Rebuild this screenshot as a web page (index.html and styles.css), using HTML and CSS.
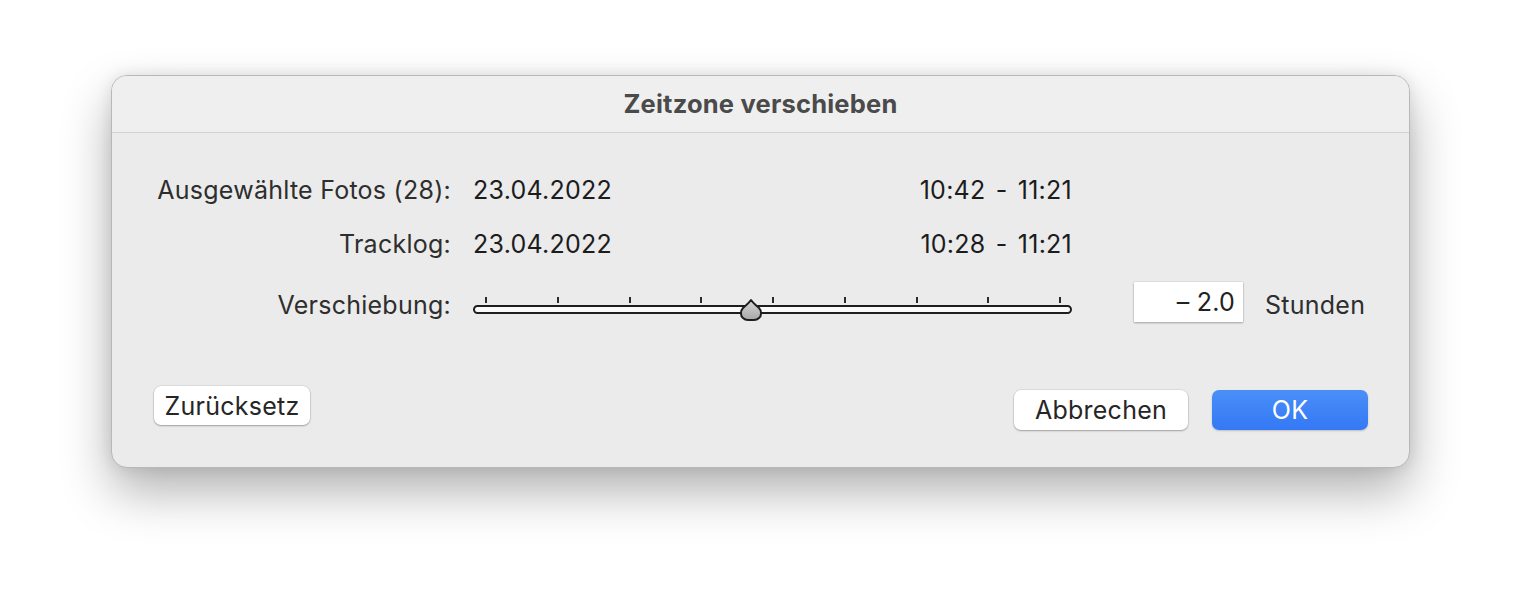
FILE: index.html
```html
<!DOCTYPE html>
<html lang="de">
<head>
<meta charset="utf-8">
<title>Zeitzone verschieben</title>
<link rel="stylesheet" href="styles.css">
</head>
<body>
<div class="window">
  <div class="titlebar">Zeitzone verschieben</div>
  <div class="content">
    <div class="grid">
      <div class="label">Ausgewählte Fotos (28):</div>
      <div class="value-row"><span>23.04.2022</span><span class="time">10:42 - 11:21</span></div>
      <div></div><div></div>

      <div class="label">Tracklog:</div>
      <div class="value-row"><span>23.04.2022</span><span class="time">10:28 - 11:21</span></div>
      <div></div><div></div>

      <div class="label shift">Verschiebung:</div>
      <div class="slider">
        <div class="ticks">
          <i></i><i></i><i></i><i></i><i></i><i></i><i></i><i></i><i></i>
        </div>
        <div class="track"></div>
        <svg class="knob" width="26" height="24" viewBox="0 0 26 24">
          <defs>
            <linearGradient id="kg" x1="0" y1="0" x2="0" y2="1">
              <stop offset="0" stop-color="#d6d6d6"/>
              <stop offset="1" stop-color="#a8a8a8"/>
            </linearGradient>
          </defs>
          <path d="M13 2 C15 5 18 7 21 10 C24 13 23.5 18 21 20 C19.5 21.5 18 22 16 22 L10 22 C8 22 6.5 21.5 5 20 C2.5 18 2 13 5 10 C8 7 11 5 13 2 Z" fill="url(#kg)" stroke="#1e1e1e" stroke-width="2" stroke-linejoin="round"/>
        </svg>
      </div>
      <div class="field">– 2.0</div>
      <div class="unit shift">Stunden</div>
    </div>
    <div class="buttons">
      <button class="btn reset">Zurücksetz</button>
      <div class="right">
        <button class="btn cancel">Abbrechen</button>
        <button class="btn ok">OK</button>
      </div>
    </div>
  </div>
</div>
</body>
</html>
```
FILE: styles.css
```css
* { box-sizing: border-box; }
html, body { margin: 0; padding: 0; background: #ffffff; }
body {
  min-height: 616px;
  padding: 75px 0 0 111px;
  font-family: Inter, "Noto Sans", "Liberation Sans", sans-serif;
  color: #262626;
}
.window {
  width: 1299px;
  height: 393px;
  border-radius: 16px;
  background: #ebebeb;
  border: 1px solid #b8b8b8;
  box-shadow: 0 24px 50px rgba(0,0,0,0.30), 0 0 16px rgba(0,0,0,0.10);
  overflow: hidden;
  display: flex;
  flex-direction: column;
}
.titlebar {
  height: 57px;
  flex: none;
  background: #efefef;
  border-bottom: 1px solid #d2d2d2;
  display: flex;
  align-items: center;
  justify-content: center;
  font-weight: 700;
  font-size: 25.5px;
  letter-spacing: 0.2px;
  color: #4a4a4a;
  padding-bottom: 2px;
}
.content {
  flex: 1;
  display: flex;
  flex-direction: column;
  padding: 0 41px 0 41px;
}
.grid {
  display: grid;
  grid-template-columns: 298px 599px 149px auto;
  column-gap: 22px;
  grid-template-rows: 54px 54px 62px;
  align-items: center;
  padding-top: 30px;
  font-size: 25px;
  letter-spacing: 0.25px;
}
.label { text-align: right; color: #2e2e2e; }
.shift { margin-top: 6px; }
.value-row {
  display: flex;
  justify-content: space-between;
  color: #1c1c1c;
}
.time { word-spacing: 3px; }
.slider {
  position: relative;
  height: 44px;
  margin-top: 5px;
}
.ticks {
  position: absolute;
  left: 12px;
  right: 11px;
  top: 14px;
  display: flex;
  justify-content: space-between;
}
.ticks i {
  display: block;
  width: 2px;
  height: 6px;
  background: #2a2a2a;
}
.track {
  position: absolute;
  left: 0;
  right: 0;
  top: 22px;
  height: 9px;
  border: 2px solid #1e1e1e;
  border-radius: 5px;
  background: #fafafa;
}
.knob {
  position: absolute;
  left: 265px;
  top: 15px;
}
.field {
  justify-self: end;
  width: 109px;
  height: 40px;
  background: #ffffff;
  box-shadow: 0 1px 2px rgba(0,0,0,0.28), 0 0 0 0.5px rgba(0,0,0,0.08);
  text-align: right;
  padding-right: 8px;
  line-height: 40px;
  color: #222;
}
.unit { color: #2e2e2e; }
.buttons {
  display: flex;
  justify-content: space-between;
  align-items: flex-start;
  margin-top: 53px;
  padding: 0 0 0 1px;
}
.right {
  display: flex;
  gap: 24px;
  margin-top: 4px;
}
.btn {
  font-family: inherit;
  font-size: 25px;
  letter-spacing: 0.25px;
  height: 40px;
  border-radius: 7px;
  border: none;
  background: #ffffff;
  color: #262626;
  box-shadow: 0 1px 2px rgba(0,0,0,0.28), 0 0 0 0.5px rgba(0,0,0,0.12);
  padding: 0;
}
.reset { width: 156px; height: 39px; }
.cancel { width: 174px; }
.ok {
  width: 156px;
  color: #ffffff;
  background: linear-gradient(#4a8ff8, #3478f5);
  box-shadow: 0 1px 2px rgba(0,0,0,0.2);
}
```
